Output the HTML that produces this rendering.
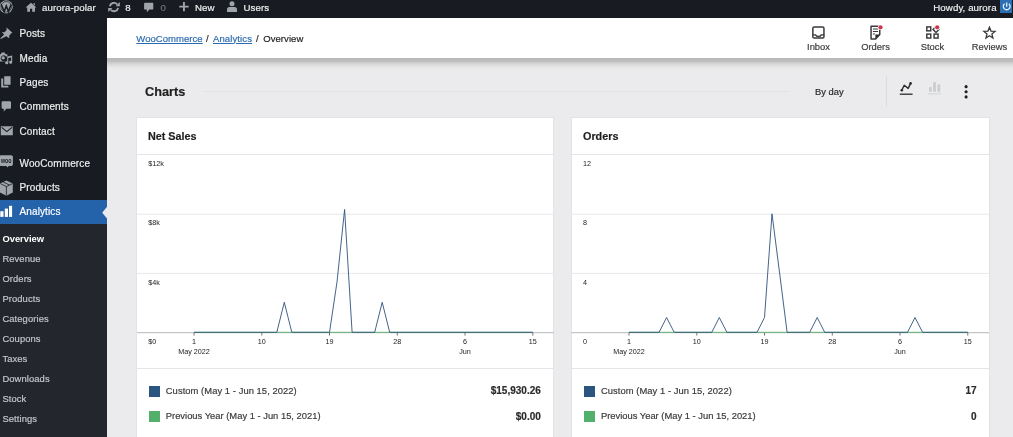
<!DOCTYPE html>
<html><head><meta charset="utf-8">
<style>
*{box-sizing:border-box;margin:0;padding:0}
html,body{width:1013px;height:437px;overflow:hidden;background:#ebebed;font-family:"Liberation Sans",sans-serif;}
body{position:relative}
#root{-webkit-text-stroke:0.18px currentColor;position:absolute;left:0;top:0;width:1013px;height:437px;overflow:hidden;will-change:transform}
.abs{position:absolute}
#adminbar{position:absolute;left:0;top:0;width:1013px;height:17.7px;background:#181c22;color:#f0f0f1;font-size:9.7px;z-index:5}
#adminbar span{position:absolute;top:0.5px;line-height:13px;white-space:nowrap;letter-spacing:0.08px}
#sidebar{position:absolute;left:0;top:18px;width:107.3px;height:419px;background:#181c22;z-index:4}
.mi{position:absolute;left:0;width:107.3px;height:24.2px;color:#f0f0f1;font-size:10px;line-height:24.2px;padding-left:19.5px;white-space:nowrap;letter-spacing:0.12px;margin-top:0.3px}
.mi.active{background:#2463aa;color:#fff}
.mi svg{position:absolute;left:0;top:0}
#submenu{position:absolute;left:0;top:205.8px;width:107.3px;height:214px;background:#23272d}
.si{position:absolute;left:2.4px;font-size:9.4px;color:#c3c7cb;line-height:20px;height:20px;white-space:nowrap;letter-spacing:0.1px;margin-top:0}
.si.cur{color:#fff;font-weight:bold;letter-spacing:0;-webkit-text-stroke:0}
#header{position:absolute;left:107px;top:18px;width:906px;height:40.3px;background:#fff;z-index:3;box-shadow:none}
#crumbs{position:absolute;left:0;top:0.7px;line-height:40px;font-size:9.5px;color:#1e1e1e;white-space:nowrap;letter-spacing:0.05px}
#crumbs>*{position:absolute;top:0}
#crumbs a{color:#2a6bb0;text-decoration:underline}
.tab{position:absolute;top:0;width:57px;height:40px;text-align:center;font-size:9.4px;color:#3c3c3c}
.tab span{position:absolute;left:0;width:57px;top:23px;line-height:11px}
.tab svg{position:absolute;left:21px;top:7px}
.card{position:absolute;top:116.6px;height:330px;background:#fff;border:1px solid #e2e3e5}
.card h3{position:absolute;left:11.3px;top:0.3px;line-height:36px;font-size:10.8px;font-weight:bold;color:#1e1e1e}
.card .hr{position:absolute;left:0;right:0;height:1px;background:#e4e5e8}
.leg{position:absolute;left:12.4px;right:11px;height:12px;font-size:9.4px;letter-spacing:0.06px;color:#3a3a3a;line-height:12px}
.leg i{position:absolute;left:0;top:1.2px;width:11.2px;height:11.2px}
.leg span{position:absolute;left:16.8px;top:0.3px;white-space:nowrap}
.leg b{position:absolute;right:1.1px;top:0.6px;color:#2b2b2b;font-size:10px;letter-spacing:0}
.leg.l2 span{letter-spacing:0}
.leg.l2 i{top:0.8px}
svg text{font-family:"Liberation Sans",sans-serif}
</style></head><body>
<div id="root">

<div id="adminbar">
<svg class="abs" style="left:-2px;top:-2px" width="20" height="18" viewBox="0 0 20 18"><circle cx="8.2" cy="8.8" r="6.6" fill="#9ea3a8"/><circle cx="8.2" cy="8.8" r="5.3" fill="none" stroke="#181c22" stroke-width="0.7"/><path d="M3.2 6.2 L6.2 13.6 L8.3 8 L10.4 13.6 L13.1 6.4" fill="none" stroke="#181c22" stroke-width="1.5"/></svg>
<svg class="abs" style="left:24px;top:0" width="14" height="14" viewBox="0 0 14 14"><path d="M7 2.8 L1.6 7.6 H3.2 V11.8 H6 V8.8 H8.2 V11.8 H11 V7.6 H12.4 Z M9.4 3.2 h1.5 v2.4 l-1.5 -1.4z" fill="#a0a5aa"/></svg>
<span style="left:42px">aurora-polar</span>
<svg class="abs" style="left:106.5px;top:0" width="14" height="14" viewBox="0 0 14 14"><path d="M2.9 6.2 A4.2 4.2 0 0 1 10.2 4.4 M11.1 7.8 A4.2 4.2 0 0 1 3.8 9.8" fill="none" stroke="#a0a5aa" stroke-width="1.9"/><path d="M8.6 6.2 h4.2 v-4.2z M5.4 7.9 h-4.2 v4.2z" fill="#a0a5aa"/></svg>
<span style="left:125.2px">8</span>
<svg class="abs" style="left:142px;top:0" width="14" height="14" viewBox="0 0 14 14"><path d="M3 2.8 h7.4 a0.9 0.9 0 0 1 0.9 0.9 v5 a0.9 0.9 0 0 1 -0.9 0.9 H7.4 l-2.6 2.6 v-2.6 H3 a0.9 0.9 0 0 1 -0.9 -0.9 V3.7 a0.9 0.9 0 0 1 0.9 -0.9z" fill="#a0a5aa"/></svg>
<span style="left:160.6px;color:#6f757c">0</span>
<svg class="abs" style="left:177px;top:0.4px" width="14" height="14" viewBox="0 0 14 14"><path d="M6 2 h1.9 v3.7 h3.7 v1.9 h-3.7 v3.7 h-1.9 v-3.7 h-3.7 v-1.9 h3.7z" fill="#a0a5aa"/></svg>
<span style="left:195px">New</span>
<svg class="abs" style="left:225px;top:0.3px" width="14" height="14" viewBox="0 0 14 14"><circle cx="7" cy="3.8" r="2.5" fill="#a0a5aa"/><path d="M2 12 v-2.6 a2.5 2.5 0 0 1 2.5 -2.5 h5 a2.5 2.5 0 0 1 2.5 2.5 v2.6z" fill="#a0a5aa"/></svg>
<span style="left:243.5px">Users</span>
<span style="left:933.3px">Howdy, aurora</span>
<div class="abs" style="left:999.6px;top:0;width:12.2px;height:12.6px;background:#2c6fb4"></div>
<svg class="abs" style="left:999.6px;top:0" width="13" height="13" viewBox="0 0 13 13"><path d="M4.6 3.7 A3.4 3.4 0 1 0 8.8 3.7" fill="none" stroke="#dff0fa" stroke-width="1.3"/><path d="M6.7 2.6 V6.8" stroke="#dff0fa" stroke-width="1.3"/></svg>
</div>

<div id="sidebar">
<div class="mi" style="top:4.1px">Posts</div>
<div class="mi" style="top:28.43px">Media</div>
<div class="mi" style="top:52.77px">Pages</div>
<div class="mi" style="top:77.1px">Comments</div>
<div class="mi" style="top:101.43px">Contact</div>
<div class="mi" style="top:133.4px">WooCommerce</div>
<div class="mi" style="top:157.8px">Products</div>
<div class="mi active" style="top:181.3px;height:24.8px;line-height:24px">Analytics</div>
<svg class="abs" style="left:101.6px;top:187.5px" width="5.7" height="13.4" viewBox="0 0 5.7 13.4"><path d="M5.7 0 L0.2 6.7 L5.7 13.4z" fill="#ebebed"/></svg>
<div id="submenu">
<div class="si cur" style="top:5.5px">Overview</div>
<div class="si" style="top:25.5px">Revenue</div>
<div class="si" style="top:45.5px">Orders</div>
<div class="si" style="top:65.5px">Products</div>
<div class="si" style="top:85.5px">Categories</div>
<div class="si" style="top:105.5px">Coupons</div>
<div class="si" style="top:125.5px">Taxes</div>
<div class="si" style="top:145.5px">Downloads</div>
<div class="si" style="top:165.5px">Stock</div>
<div class="si" style="top:185.5px">Settings</div>
</div>
<!-- menu icons -->
<svg class="abs" style="left:0;top:-18px" width="20" height="240" viewBox="0 0 20 240">
<g fill="#a0a5aa">
<!-- pin -->
<path d="M6.6 27.6 L12.4 32.8 L11 33.6 L9.2 35.8 L9.2 38.2 L6.2 36.2 L0.8 39 L0.2 38.4 L4.2 34.4 L1.8 32.2 L4.6 32.2 L6.6 30 Z"/>
<!-- media -->
<path d="M-1 54.2 h1.8 l0.9 -1.7 h3 l0.9 1.7 h1.8 v2.2 h-1.6 a2.9 2.9 0 1 0 -0.9 4.6 v0.4 h-5.9z M3.2 56.3 a1.6 1.6 0 1 0 0.01 0z"/>
<path d="M7.2 56.6 l5 -1.2 v6.8 a1.6 1.5 0 1 1 -1.1 -1.4 v-3.4 l-2.8 0.7 v4.7 a1.6 1.5 0 1 1 -1.1 -1.4z"/>
<!-- pages -->
<path d="M4.2 76.2 h6.4 v8.6 h-6.4z"/><path d="M1.2 78.4 h2 v7.4 h5.2 v1.6 h-7.2z"/>
<!-- comment -->
<path d="M2.6 101.2 h7.4 a1 1 0 0 1 1 1 v5.6 a1 1 0 0 1 -1 1 h-3.6 l-2.6 2.8 v-2.8 h-1.2 a1 1 0 0 1 -1 -1 v-5.6 a1 1 0 0 1 1 -1z"/>
<!-- envelope -->
<path d="M0.8 126.2 h12 v9 h-12z"/>
<!-- woo -->
<path d="M1 155.3 h10.2 a1.7 1.7 0 0 1 1.7 1.7 v7.2 a1.7 1.7 0 0 1 -1.7 1.7 h-2.6 l-1.2 1.6 l-1 -1.6 h-5.4 a1.7 1.7 0 0 1 -1.7 -1.7 v-7.2 a1.7 1.7 0 0 1 1.7 -1.7z"/>
<!-- product box -->
<path d="M6.4 180.4 L12.8 183.4 V192.4 L6.4 195.8 L0 192.4 V183.4 Z"/>
</g>
<path d="M1.6 127.4 L6.8 131.6 L12 127.4" fill="none" stroke="#181c22" stroke-width="1.2"/>
<path d="M0.4 183.6 L6.4 186.6 L12.6 183.6 M6.4 186.6 V195.4 M3.2 182 L9.4 185" fill="none" stroke="#181c22" stroke-width="0.8"/>
<text x="1" y="163" font-size="6.4" font-weight="bold" fill="#181c22" textLength="10.6" lengthAdjust="spacingAndGlyphs" style="-webkit-text-stroke:0">woo</text>
<g fill="#fff"><rect x="0.3" y="211.2" width="3.2" height="5.7"/><rect x="4.8" y="208.6" width="3.2" height="8.3"/><rect x="9" y="205.8" width="3.1" height="11.1"/></g>
</svg>
</div>

<div id="header">
<div id="crumbs"><a style="left:29.3px">WooCommerce</a><span style="left:99px">/</span><a style="left:106px;letter-spacing:0.12px">Analytics</a><span style="left:149px">/</span><span style="left:156.3px">Overview</span></div>
<div class="tab" style="left:683px"><svg width="16" height="16" viewBox="0 0 16 16"><rect x="1.85" y="1.95" width="11.1" height="11.1" rx="1.3" fill="none" stroke="#3a3a3c" stroke-width="1.5"/><path d="M1.85 9.9 H4.5 Q5.2 11.5 7.4 11.5 Q9.6 11.5 10.3 9.9 H12.95" fill="none" stroke="#3a3a3c" stroke-width="1.4"/></svg><span>Inbox</span></div>
<div class="tab" style="left:740px"><svg width="16" height="16" viewBox="0 0 16 16"><path d="M3.05 1.25 H11.75 V9.6 L7.6 13.95 H3.05 Z" fill="none" stroke="#3a3a3c" stroke-width="1.5" stroke-linejoin="round"/><path d="M11.9 9.4 H7.4 V14.1z" fill="#2c2c2e"/><path d="M4.9 4 h5.2 M4.9 6.5 h5.2 M4.9 9 h2" stroke="#3a3a3c" stroke-width="1.2"/><circle cx="12.5" cy="2.3" r="2.7" fill="#fff"/><circle cx="12.5" cy="2.3" r="2.1" fill="#c9384a"/></svg><span>Orders</span></div>
<div class="tab" style="left:797px"><svg width="16" height="16" viewBox="0 0 16 16"><g fill="none" stroke="#3a3a3c" stroke-width="1.45"><rect x="1.8" y="1.9" width="3.95" height="3.95"/><rect x="1.8" y="9.1" width="3.95" height="3.95"/><rect x="9.1" y="9.1" width="3.95" height="3.95"/><path d="M11 1.6 L13.9 4.5 L11 7.4 L8.1 4.5Z"/></g><circle cx="12.2" cy="2.3" r="2.8" fill="#fff"/><circle cx="12.2" cy="2.3" r="2.1" fill="#c9384a"/></svg><span>Stock</span></div>
<div class="tab" style="left:854px"><svg width="16" height="16" viewBox="0 0 16 16"><path d="M7.45 2.30 L8.98 6.10 L13.06 6.38 L9.92 9.00 L10.92 12.97 L7.45 10.80 L3.98 12.97 L4.98 9.00 L1.84 6.38 L5.92 6.10Z" fill="none" stroke="#3a3a3c" stroke-width="1.3" stroke-linejoin="miter"/></svg><span>Reviews</span></div>
</div>

<div class="abs" style="left:107px;top:57.8px;width:906px;height:12px;z-index:2;background:linear-gradient(to bottom,#b9b9ba 0,#bdbdbe 3px,#d3d3d4 5.5px,#e2e2e3 8px,#e9e9ea 10px,#ebebed 12px)"></div>
<!-- Charts toolbar -->
<div class="abs" style="left:145px;top:83.3px;font-size:12.7px;font-weight:bold;color:#1e1e1e;line-height:18px">Charts</div>
<div class="abs" style="left:203px;top:91px;width:587px;height:1px;background:#e2e3e5"></div>
<div class="abs" style="left:815px;top:86px;font-size:9.4px;color:#2a2a2a;line-height:12px">By day</div>
<div class="abs" style="left:885.5px;top:76px;width:1px;height:31px;background:#dcdcde"></div>
<svg class="abs" style="left:896px;top:78px" width="20" height="20" viewBox="0 0 20 20"><path d="M5.8 12.2 L8.2 7.3 L12.2 10.4 L14.6 5.4" fill="none" stroke="#2a2a2c" stroke-width="1.4" stroke-linejoin="round"/><circle cx="14.6" cy="5.4" r="1.3" fill="#2a2a2c"/><circle cx="5.8" cy="12.2" r="1.3" fill="#2a2a2c"/><path d="M3.8 16.2 h12.8" stroke="#2a2a2c" stroke-width="1.3"/></svg>
<svg class="abs" style="left:925px;top:78px" width="20" height="20" viewBox="0 0 20 20"><g fill="#cbccce"><rect x="4.1" y="9.1" width="2.6" height="4.6"/><rect x="8.1" y="4.2" width="2.8" height="9.5"/><rect x="12.5" y="6.4" width="2.7" height="7.3"/></g><path d="M3.2 15.9 h12.9" stroke="#d2d3d5" stroke-width="1"/></svg>
<svg class="abs" style="left:962px;top:83px" width="8" height="18" viewBox="0 0 8 18"><circle cx="4.1" cy="3.65" r="1.55" fill="#1e1e1e"/><circle cx="4.1" cy="8.75" r="1.55" fill="#1e1e1e"/><circle cx="4.1" cy="13.9" r="1.55" fill="#1e1e1e"/></svg>

<!-- Net Sales card -->
<div class="card" style="left:135.6px;width:418.3px">
<h3>Net Sales</h3>
<div class="hr" style="top:36.1px"></div>
<svg class="abs" style="left:-0.1px;top:0.1px" width="417" height="260" viewBox="0 0 417 260">
<g stroke="#e7e8ec" stroke-width="1"><path d="M0 96.2 H417 M0 155.4 H417"/></g>
<path d="M0 214.6 H417" stroke="#c4c5c7" stroke-width="1.2"/>
<g font-size="7.2" fill="#222"><text x="11.3" y="48.1">$12k</text><text x="11.3" y="107.2">$8k</text><text x="11.3" y="166.6">$4k</text><text x="11.3" y="226.2">$0</text></g>
<g font-size="7.2" fill="#222" text-anchor="middle"><text x="57" y="226.2">1</text><text x="124.8" y="226.2">10</text><text x="192.5" y="226.2">19</text><text x="260.3" y="226.2">28</text><text x="328" y="226.2">6</text><text x="395.8" y="226.2">15</text><text x="57" y="236.3">May 2022</text><text x="328" y="236.3">Jun</text></g>
<g stroke="#555" stroke-width="0.8"><path d="M57 214.6 v3 M124.8 214.6 v3 M192.5 214.6 v3 M260.3 214.6 v3 M328 214.6 v3 M395.8 214.6 v3"/></g>
<path d="M57 214.3 H395.8" stroke="#5cb06c" stroke-width="0.9" fill="none"/>
<path d="M57 214.3 H139.8 L147.3 184.3 L154.8 214.3 H192.5 L200 164 L207.6 91.5 L215.1 214.3 H237.7 L245.2 184.3 L252.7 214.3 H395.8" stroke="#2f5279" stroke-width="0.9" fill="none" stroke-linejoin="miter"/>
</svg>
<div class="hr" style="top:250.8px"></div>
<div class="leg" style="top:266.8px"><i style="background:#2b5581"></i><span>Custom (May 1 - Jun 15, 2022)</span><b>$15,930.26</b></div>
<div class="leg l2" style="top:292.5px"><i style="background:#52b06b"></i><span>Previous Year (May 1 - Jun 15, 2021)</span><b>$0.00</b></div>
</div>

<!-- Orders card -->
<div class="card" style="left:570.7px;width:419px">
<h3>Orders</h3>
<div class="hr" style="top:36.1px"></div>
<svg class="abs" style="left:-0.7px;top:0.1px" width="418" height="260" viewBox="0 0 418 260">
<g stroke="#e7e8ec" stroke-width="1"><path d="M0 96.2 H418 M0 155.4 H418"/></g>
<path d="M0 214.6 H418" stroke="#c4c5c7" stroke-width="1.2"/>
<g font-size="7.2" fill="#222"><text x="12" y="48.1">12</text><text x="12" y="107.2">8</text><text x="12" y="166.6">4</text><text x="12" y="226.2">0</text></g>
<g font-size="7.2" fill="#222" text-anchor="middle"><text x="58" y="226.2">1</text><text x="125.8" y="226.2">10</text><text x="193.5" y="226.2">19</text><text x="261.3" y="226.2">28</text><text x="329" y="226.2">6</text><text x="396.8" y="226.2">15</text><text x="58" y="236.3">May 2022</text><text x="329" y="236.3">Jun</text></g>
<g stroke="#555" stroke-width="0.8"><path d="M58 214.6 v3 M125.8 214.6 v3 M193.5 214.6 v3 M261.3 214.6 v3 M329 214.6 v3 M396.8 214.6 v3"/></g>
<path d="M58 214.3 H396.8" stroke="#5cb06c" stroke-width="0.9" fill="none"/>
<path d="M58 214.3 H88.1 L95.6 199.5 L103.2 214.3 H140.8 L148.3 199.5 L155.9 214.3 H186 L193.5 199.5 L201 95.8 L208.6 155 L216.1 214.3 H238.7 L246.2 199.5 L253.7 214.3 H336.5 L344 199.5 L351.6 214.3 H396.8" stroke="#2f5279" stroke-width="0.9" fill="none" stroke-linejoin="miter"/>
</svg>
<div class="hr" style="top:250.8px"></div>
<div class="leg" style="top:266.8px"><i style="background:#2b5581"></i><span>Custom (May 1 - Jun 15, 2022)</span><b>17</b></div>
<div class="leg l2" style="top:292.5px"><i style="background:#52b06b"></i><span>Previous Year (May 1 - Jun 15, 2021)</span><b>0</b></div>
</div>

</div>
</body></html>
